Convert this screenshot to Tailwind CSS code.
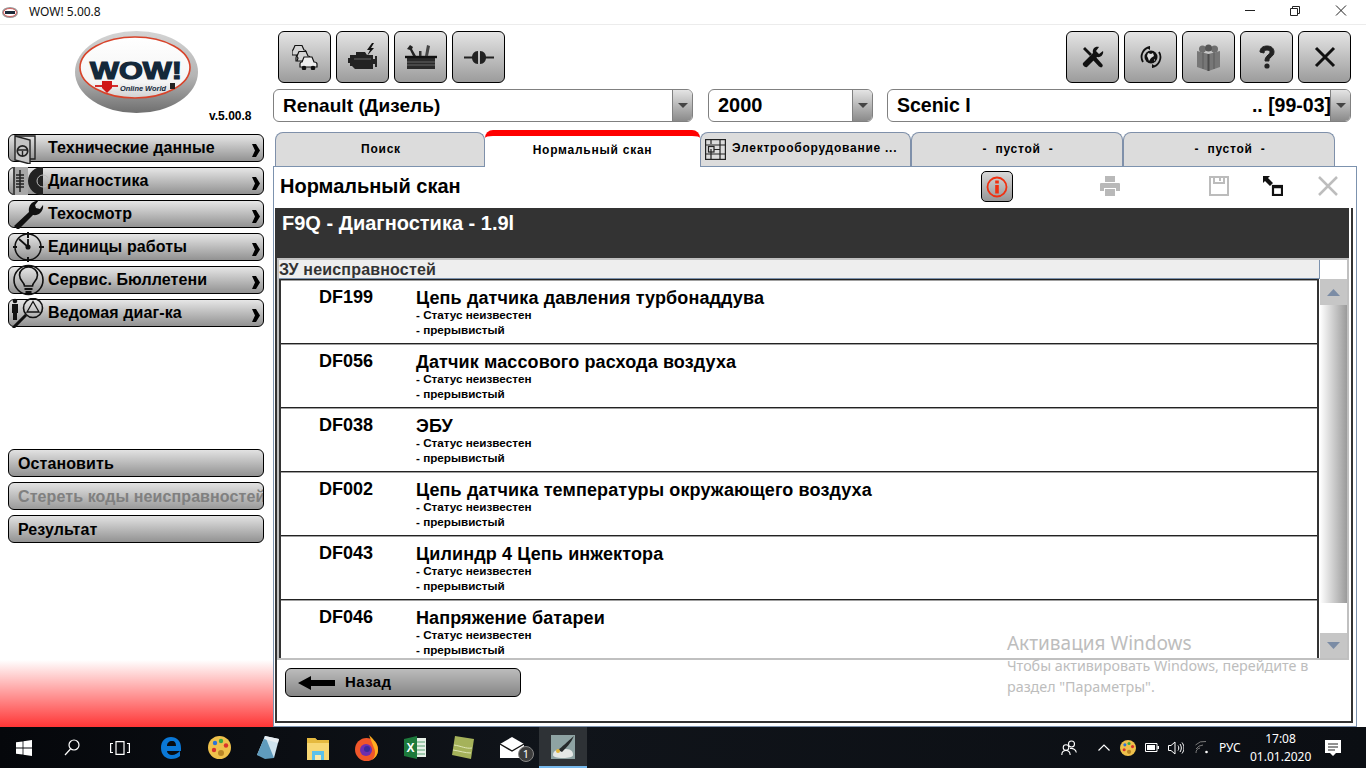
<!DOCTYPE html>
<html lang="ru">
<head>
<meta charset="utf-8">
<script src="https://cdn.jsdelivr.net/npm/@tailwindcss/browser@4"></script>
<title>WOW! 5.00.8</title>
</head>
<body class="relative w-[1366px] h-[768px] overflow-hidden flex flex-col bg-white text-black font-['Liberation_Sans',Arial,sans-serif]">

<!-- title bar -->
<header class="h-[25px] shrink-0 flex items-center border-b border-[#ececec] font-['Noto_Sans',sans-serif] text-[12px] text-[#111]">
  <svg class="ml-[2px] w-[16px] h-[11px]" viewBox="0 0 16 11"><ellipse cx="8" cy="5.5" rx="8" ry="5.5" fill="#9a9a9a"/><ellipse cx="8" cy="5.5" rx="6.5" ry="4" fill="#fff" stroke="#d33" stroke-width=".7"/><rect x="3" y="4" width="10" height="3" fill="#1c2a3a"/></svg>
  <span class="ml-[11px]">WOW! 5.00.8</span>
  <div class="ml-auto flex">
    <svg class="w-[46px] h-[24px]" viewBox="0 0 46 24"><path d="M17 10.500h10" stroke="#222" fill="none"/></svg>
    <svg class="w-[46px] h-[24px]" viewBox="0 0 46 24"><path d="M16.500 8.500h7v7h-7zM18.500 8.500v-2h7v7h-2" stroke="#222" fill="none"/></svg>
    <svg class="w-[46px] h-[24px]" viewBox="0 0 46 24"><path d="M16 5.500l10 10M26 5.500l-10 10" stroke="#222" fill="none"/></svg>
  </div>
</header>

<div class="h-[702px] shrink-0 flex">
  <!-- sidebar -->
  <aside class="w-[273px] shrink-0 flex flex-col bg-[linear-gradient(to_bottom,#ffffff_635px,#ff3535_702px)]">
    <div class="h-[109px] flex pl-[75px] pt-[6px]">
      <svg class="w-[123px] h-[82px] shrink-0" viewBox="0 0 123 82">
        <defs>
          <linearGradient id="lg1" x1="0" y1="0" x2="0" y2="1"><stop offset="0" stop-color="#d4d4d4"/><stop offset=".55" stop-color="#b4b4b4"/><stop offset="1" stop-color="#6f6f6f"/></linearGradient>
          <linearGradient id="lg2" x1="0" y1="0" x2="0" y2="1"><stop offset="0" stop-color="#ffffff"/><stop offset=".75" stop-color="#f4f4f4"/><stop offset="1" stop-color="#d0d0d0"/></linearGradient>
        </defs>
        <ellipse cx="61.500" cy="41" rx="61.500" ry="41" fill="url(#lg1)"/>
        <ellipse cx="60" cy="36.500" rx="55" ry="30.500" fill="url(#lg2)" stroke="#d8432a" stroke-width="1.600"/>
        <text x="15" y="48" font-family="'Liberation Sans',sans-serif" font-weight="700" font-size="23" fill="#14283a" stroke="#14283a" stroke-width="1.200" textLength="92" lengthAdjust="spacingAndGlyphs">WOW!</text>
        <path d="M20 55h23" stroke="#d01818" stroke-width="1.800"/>
        <path d="M27 50h10v7l-5 5-5-5z" fill="#d01818"/>
        <text x="45" y="59.500" font-family="'Liberation Sans',sans-serif" font-weight="700" font-style="italic" font-size="7" fill="#14283a" textLength="46" lengthAdjust="spacingAndGlyphs">Online World</text>
        <rect x="95" y="52" width="5" height="6" fill="#222"/>
      </svg>
      <span class="ml-[11px] self-end mb-[11px] text-[12px] leading-[14px] font-bold">v.5.00.8</span>
    </div>

    <nav class="flex flex-col gap-[5px] pl-[8px] text-[16px] font-bold tracking-[0.1px]">
      <a class="w-[256px] h-[28px] flex items-center rounded-[6px] border border-black bg-[linear-gradient(to_bottom,#e6e6e6,#929292)]">
        <svg class="w-[39px] h-[32px] shrink-0" viewBox="0 0 39 32" fill="none" stroke="#222" stroke-width="1.400"><path d="M6 4h20v23h-5"/><path d="M6 4l15 4v24L6 28z" fill="#c4c4c4"/><circle cx="13.500" cy="19" r="5.200" stroke-width="1.700"/><path d="M9 18h9M13.500 19v5"/></svg>
        <span>Технические данные</span>
        <svg class="ml-auto mr-[3px] mt-[4px] w-[8px] h-[13px]" viewBox="0 0 8 13"><path d="M0 0h4l4 6.500-4 6.500H0l3-6.500z" fill="#000"/></svg>
      </a>
      <a class="w-[256px] h-[28px] flex items-center rounded-[6px] border border-black bg-[linear-gradient(to_bottom,#e6e6e6,#929292)]">
        <svg class="w-[39px] h-[28px] shrink-0" viewBox="0 0 39 28"><rect x="4" y="0" width="15" height="28" fill="#a8a8a8"/><path d="M5 0v28" stroke="#222" stroke-width="1.500"/><path d="M11 3v22M7 8h8M7 11h8M7 14h8M7 17h8M7 20h8" stroke="#222" stroke-width="1.500"/><path d="M34 0a14 14 0 0 0-15 14 14 14 0 0 0 15 14z" fill="#222"/><circle cx="34" cy="14" r="6" fill="none" stroke="#bbb"/></svg>
        <span>Диагностика</span>
        <svg class="ml-auto mr-[3px] mt-[4px] w-[8px] h-[13px]" viewBox="0 0 8 13"><path d="M0 0h4l4 6.500-4 6.500H0l3-6.500z" fill="#000"/></svg>
      </a>
      <a class="w-[256px] h-[28px] flex items-center rounded-[6px] border border-black bg-[linear-gradient(to_bottom,#e6e6e6,#929292)]">
        <svg class="w-[39px] h-[30px] shrink-0" viewBox="0 0 39 30"><path d="M5 27L20 13c-1-5 2-10 7-11l3-1-4 5 1 3 4 1 3-4c1 6-4 11-10 10L9 31z" fill="#111"/></svg>
        <span>Техосмотр</span>
        <svg class="ml-auto mr-[3px] mt-[4px] w-[8px] h-[13px]" viewBox="0 0 8 13"><path d="M0 0h4l4 6.500-4 6.500H0l3-6.500z" fill="#000"/></svg>
      </a>
      <a class="w-[256px] h-[28px] flex items-center rounded-[6px] border border-black bg-[linear-gradient(to_bottom,#e6e6e6,#929292)]">
        <svg class="w-[39px] h-[32px] shrink-0" viewBox="0 0 39 32" fill="none" stroke="#111" stroke-width="1.500"><circle cx="19" cy="16" r="13"/><path d="M19 1v6M4 16h4M30 16h5M19 26v5" stroke-width="2"/><path d="M10 8l9 8M19 16V8" stroke-width="1.800"/><circle cx="19" cy="16" r="1.800" fill="#111"/></svg>
        <span>Единицы работы</span>
        <svg class="ml-auto mr-[3px] mt-[4px] w-[8px] h-[13px]" viewBox="0 0 8 13"><path d="M0 0h4l4 6.500-4 6.500H0l3-6.500z" fill="#000"/></svg>
      </a>
      <a class="w-[256px] h-[28px] flex items-center rounded-[6px] border border-black bg-[linear-gradient(to_bottom,#e6e6e6,#929292)]">
        <svg class="w-[39px] h-[32px] shrink-0" viewBox="0 0 39 32" fill="none" stroke="#111" stroke-width="1.600"><circle cx="19.500" cy="16" r="14.500"/><path d="M15.500 22c0-4-5-5-5-11a9 8 0 0 1 18 0c0 6-5 7-5 11z"/><path d="M15.500 25h8M16.500 28h6" stroke-width="2"/></svg>
        <span>Сервис. Бюллетени</span>
        <svg class="ml-auto mr-[3px] mt-[4px] w-[8px] h-[13px]" viewBox="0 0 8 13"><path d="M0 0h4l4 6.500-4 6.500H0l3-6.500z" fill="#000"/></svg>
      </a>
      <a class="w-[256px] h-[28px] flex items-center rounded-[6px] border border-black bg-[linear-gradient(to_bottom,#e6e6e6,#929292)]">
        <svg class="w-[39px] h-[30px] shrink-0" viewBox="0 0 39 30"><circle cx="6" cy="3" r="2.300" fill="#111"/><path d="M3 6h6v9H8v7H4v-7H3z" fill="#111"/><circle cx="24" cy="10" r="9.500" fill="none" stroke="#111" stroke-width="1.600"/><path d="M24 3.500l6 10.500H18z" fill="none" stroke="#111" stroke-width="1.300"/><path d="M17 17L4 30" stroke="#111" stroke-width="3"/></svg>
        <span>Ведомая диаг-ка</span>
        <svg class="ml-auto mr-[3px] mt-[4px] w-[8px] h-[13px]" viewBox="0 0 8 13"><path d="M0 0h4l4 6.500-4 6.500H0l3-6.500z" fill="#000"/></svg>
      </a>
    </nav>

    <div class="mt-[122px] flex flex-col gap-[5px] pl-[8px] text-[16px] font-bold tracking-[0.1px]">
      <button class="w-[256px] h-[28px] pl-[9px] pt-[1px] text-left rounded-[6px] border border-black bg-[linear-gradient(to_bottom,#e2e2e2,#929292)]">Остановить</button>
      <button class="w-[256px] h-[28px] pl-[9px] pt-[1px] text-left rounded-[6px] border border-black bg-[linear-gradient(to_bottom,#e2e2e2,#9a9a9a)] text-[#808080] whitespace-nowrap overflow-hidden">Стереть коды неисправностей</button>
      <button class="w-[256px] h-[28px] pl-[9px] pt-[1px] text-left rounded-[6px] border border-black bg-[linear-gradient(to_bottom,#e2e2e2,#929292)]">Результат</button>
    </div>
  </aside>

  <!-- main -->
  <main class="w-[1084px] shrink-0 flex flex-col">
    <!-- top buttons -->
    <div class="h-[52px] mt-[6px] shrink-0 flex gap-[5px] pl-[5px]">
      <button class="w-[53px] h-[52px] flex items-center justify-center rounded-[6px] border border-black bg-[linear-gradient(to_bottom,#e4e4e4,#9c9c9c)]">
        <svg class="w-[26px] h-[26px]" viewBox="0 0 26 26" fill="#d4d4d4" stroke="#111" stroke-width="1.200">
          <path d="M1 6l2-4.500h7L12 6c1 0 2 .5 2 2v3H0V8c0-1 0-2 1-2z"/>
          <path d="M5 12l2-4.500h7l2 4.500c1 0 2 .5 2 2v3H4v-3c0-1 0-2 1-2z"/>
          <path d="M10 18l2-5h8l2 5c2 0 3 1 3 2v3H8v-3c0-1 1-2 2-2z" fill="#eee"/>
          <circle cx="12" cy="24" r="1.700" fill="#111"/><circle cx="21" cy="24" r="1.700" fill="#111"/>
          <path d="M4 11l2 3-1 3" stroke="#111" fill="none"/>
        </svg>
      </button>
      <button class="w-[53px] h-[52px] flex items-center justify-center rounded-[6px] border border-black bg-[linear-gradient(to_bottom,#e4e4e4,#9c9c9c)]">
        <svg class="w-[32px] h-[28px]" viewBox="0 0 32 28"><path d="M1 15h2v-3h6V9h9l2 3h6v4h2v-3h2v11h-2v-3h-2v5H8l-3-3H3v-3H1z" fill="#222"/><path d="M7 16h17" stroke="#666"/><path d="M25 0l-5 7h3l-3 6 7-8h-3l3-5z" fill="#111"/></svg>
      </button>
      <button class="w-[53px] h-[52px] flex items-center justify-center rounded-[6px] border border-black bg-[linear-gradient(to_bottom,#e4e4e4,#9c9c9c)]">
        <svg class="w-[32px] h-[24px]" viewBox="0 0 32 24"><rect x="2" y="11" width="28" height="13" fill="#2a2a2a"/><path d="M0 12h32" stroke="#111" stroke-width="2.400"/><path d="M2 17h28M2 20h28" stroke="#666"/><path d="M5 0l3 2-1 2 4 7H8L5 5 2 4z" fill="#222"/><path d="M22 0l3 1-2 10h-3z" fill="#444"/><rect x="14" y="6" width="2.500" height="5" fill="#333"/></svg>
      </button>
      <button class="w-[53px] h-[52px] flex items-center justify-center rounded-[6px] border border-black bg-[linear-gradient(to_bottom,#e4e4e4,#9c9c9c)]">
        <svg class="w-[30px] h-[13px]" viewBox="0 0 30 13"><path d="M0 6.500h9M21 6.500h9" stroke="#222" stroke-width="2"/><path d="M14 0c-4 0-6 3-6 6.500S10 13 14 13zM16 0c4 0 6 3 6 6.500S20 13 16 13z" fill="#222"/></svg>
      </button>
      <div class="flex-1"></div>
      <button class="w-[53px] h-[52px] flex items-center justify-center rounded-[6px] border border-black bg-[linear-gradient(to_bottom,#e4e4e4,#9c9c9c)]">
        <svg class="w-[22px] h-[22px]" viewBox="0 0 22 22"><path d="M3 1l7 7-2 2-7-7zM10 13l3-3 7 8c1 1 1 2 0 3s-2 0-3-.500z" fill="#111"/><path d="M21 5l-4 3-3-3 3-4c-4-1-7 2-6 6L1 17c-1 2 2 5 4 4l10-10c4 1 7-3 6-6z" fill="#111"/></svg>
      </button>
      <button class="w-[53px] h-[52px] flex items-center justify-center rounded-[6px] border border-black bg-[linear-gradient(to_bottom,#e4e4e4,#9c9c9c)]">
        <svg class="w-[22px] h-[22px]" viewBox="0 0 22 22"><circle cx="11" cy="11" r="6.500" fill="#111"/><path d="M8 7l3 1 2-1 1 3-3 2-2 3-1-3-1-2zM14 13l1 1-1 1z" fill="#ddd"/><path d="M3 16A10 10 0 0 1 10 1M19 6a10 10 0 0 1-7 15" fill="none" stroke="#111" stroke-width="1.800"/><path d="M10 0l-3 2 3 2zM12 22l3-2-3-2z" fill="#111"/></svg>
      </button>
      <button class="w-[53px] h-[52px] flex items-center justify-center rounded-[6px] border border-black bg-[linear-gradient(to_bottom,#e4e4e4,#9c9c9c)]">
        <svg class="w-[23px] h-[27px]" viewBox="0 0 23 27"><circle cx="5.500" cy="5" r="3.500" fill="#6e6e6e"/><circle cx="17.500" cy="5" r="3.500" fill="#6e6e6e"/><circle cx="11.500" cy="4" r="3.500" fill="#555"/><path d="M0 7l11.500 3L23 7v16l-11.500 4L0 23z" fill="#777"/><path d="M11.500 10v17" stroke="#4c4c4c" stroke-width="2"/><path d="M6 8v17M17 8v17" stroke="#5c5c5c"/></svg>
      </button>
      <button class="w-[53px] h-[52px] flex items-center justify-center rounded-[6px] border border-black bg-[linear-gradient(to_bottom,#e4e4e4,#9c9c9c)]">
        <svg class="w-[20px] h-[24px]" viewBox="0 0 20 24"><path d="M3 7c0-4 3-6 7-6s7 2 7 6c0 3-2 4-4 6-1 1-1 2-1 3H8c0-3 1-4 3-6 1-1 2-2 2-3s-1-2-3-2-3 1-3 3z" fill="#222" stroke="#222"/><circle cx="10" cy="21" r="2.600" fill="#222"/></svg>
      </button>
      <button class="w-[53px] h-[52px] mr-[6px] flex items-center justify-center rounded-[6px] border border-black bg-[linear-gradient(to_bottom,#e4e4e4,#9c9c9c)]">
        <svg class="w-[22px] h-[22px]" viewBox="0 0 22 22"><path d="M2 2l18 18M20 2L2 20" stroke="#111" stroke-width="3"/></svg>
      </button>
    </div>

    <!-- combos -->
    <div class="h-[33px] mt-[6px] shrink-0 flex font-bold">
      <div class="w-[420px] flex items-stretch rounded-[6px] border border-[#808080] overflow-hidden text-[19px] tracking-[0.06px]">
        <span class="flex-1 pl-[9px] leading-[31px]">Renault (Дизель)</span>
        <span class="w-[20px] flex items-center justify-center border-l border-[#808080] bg-[linear-gradient(to_bottom,#e4e4e4,#8a8a8a)]"><svg class="w-[10px] h-[5px]" viewBox="0 0 10 5"><path d="M0 0h10L5 5z" fill="#444"/></svg></span>
      </div>
      <div class="w-[165px] ml-[15px] flex items-stretch rounded-[6px] border border-[#808080] overflow-hidden text-[20px]">
        <span class="flex-1 pl-[9px] leading-[31px]">2000</span>
        <span class="w-[20px] flex items-center justify-center border-l border-[#808080] bg-[linear-gradient(to_bottom,#e4e4e4,#8a8a8a)]"><svg class="w-[10px] h-[5px]" viewBox="0 0 10 5"><path d="M0 0h10L5 5z" fill="#444"/></svg></span>
      </div>
      <div class="w-[464px] ml-[14px] flex items-stretch rounded-[6px] border border-[#808080] overflow-hidden text-[19.5px]">
        <span class="flex-1 pl-[9px] leading-[31px]">Scenic I</span>
        <span class="leading-[31px] -mr-[1px]">.. [99-03]</span>
        <span class="w-[20px] flex items-center justify-center border-l border-[#808080] bg-[linear-gradient(to_bottom,#e4e4e4,#8a8a8a)]"><svg class="w-[10px] h-[5px]" viewBox="0 0 10 5"><path d="M0 0h10L5 5z" fill="#444"/></svg></span>
      </div>
    </div>

    <!-- tabs -->
    <div class="h-[36px] mt-[8px] shrink-0 flex items-start pl-[2px] text-[12px] font-bold tracking-[0.75px]">
      <div class="w-[210px] h-[34px] mt-[2px] pb-[2px] pl-[2px] flex items-center justify-center rounded-t-[8px] border border-b-0 border-[#7f90aa] bg-[#dcdcdc]">Поиск</div>
      <div class="relative z-10 w-[215px] h-[37px] flex items-center justify-center rounded-t-[8px] border-t-[6px] border-[#ff0000] bg-white pb-[3px]">Нормальный скан</div>
      <div class="w-[211px] h-[34px] mt-[2px] pb-[3px] flex items-center gap-[6px] pl-[4px] rounded-t-[8px] border border-b-0 border-[#7f90aa] bg-[#dcdcdc] whitespace-nowrap">
        <svg class="w-[21px] h-[21px] shrink-0 mt-[3px]" viewBox="0 0 21 21" fill="none" stroke="#222" stroke-width="1.200"><rect x=".6" y=".6" width="19.800" height="19.800"/><path d="M.6 6h19.800M.6 15h19.800M6 1v4M6 10v11M15 1v19M9 10.500h6"/><rect x="3.500" y="7.500" width="5.500" height="5.500"/></svg>
        <span>Электрооборудование ...</span>
      </div>
      <div class="w-[212px] h-[34px] mt-[2px] pb-[2px] pl-[2px] flex items-center justify-center rounded-t-[8px] border border-b-0 border-[#7f90aa] bg-[#dcdcdc] whitespace-pre">-  пустой  -</div>
      <div class="w-[212px] h-[34px] mt-[2px] pb-[2px] pl-[2px] flex items-center justify-center rounded-t-[8px] border border-b-0 border-[#7f90aa] bg-[#dcdcdc] whitespace-pre">-  пустой  -</div>
    </div>

    <!-- panel -->
    <section class="flex-1 min-h-0 flex flex-col border border-[#7c92ae] bg-white">
      <div class="h-[41px] shrink-0 flex items-center relative">
        <h1 class="pl-[6px] pb-[3px] text-[20px] leading-[24px] font-bold">Нормальный скан</h1>
        <button class="absolute left-[707px] top-[4px] w-[32px] h-[31px] flex items-center justify-center rounded-[5px] border border-black bg-[linear-gradient(to_bottom,#d8d8d8,#969696)]">
          <svg class="w-[22px] h-[22px]" viewBox="0 0 22 22"><circle cx="11" cy="11" r="9.500" fill="none" stroke="#f03010" stroke-width="1.800"/><rect x="9.200" y="4.500" width="3.600" height="3" fill="#f03010"/><rect x="9.200" y="9" width="3.600" height="8.500" fill="#f03010"/></svg>
        </button>
        <svg class="absolute left-[826px] top-[9px] w-[20px] h-[20px]" viewBox="0 0 20 20"><path d="M5 0h10v6H5zM1 7h18c1 0 1 1 1 1v7h-4v-3H4v3H0V8s0-1 1-1zM5 13h10v7H5z" fill="#b9b9b9"/></svg>
        <svg class="absolute left-[935px] top-[9px] w-[20px] h-[20px]" viewBox="0 0 20 20" fill="none" stroke="#bcbcbc" stroke-width="2"><path d="M1 1h18v18H1z"/><path d="M5 1v6h10V1M11 2v3" /></svg>
        <svg class="absolute left-[989px] top-[9px] w-[20px] h-[20px]" viewBox="0 0 20 20"><path d="M0 0h7L5 2l5 5-3 3-5-5-2 2z" fill="#111"/><rect x="10" y="10" width="9" height="9" fill="none" stroke="#111" stroke-width="2.200"/><path d="M10 11h9" stroke="#111" stroke-width="2.500"/></svg>
        <svg class="absolute left-[1044px] top-[9px] w-[20px] h-[20px]" viewBox="0 0 20 20"><path d="M1 1l18 18M19 1L1 19" stroke="#bdbdbd" stroke-width="2.500"/></svg>
      </div>

      <div class="flex-1 min-h-0 ml-[1px] mr-[3px] mb-[3px] border-2 border-t-0 border-[#333333] flex flex-col">
        <div class="h-[50px] shrink-0 mr-[2px] -ml-[2px] bg-[#333333] text-white text-[20px] font-bold pl-[7px] pt-[5px] leading-[20px]">F9Q - Диагностика - 1.9l</div>

        <div class="h-[402px] shrink-0 mr-[2px] border-2 border-[#c0c0c0] flex">
          <div class="w-[1041px] flex flex-col">
            <div class="h-[19px] shrink-0 bg-[#eeeeee] border-r border-b border-[#7c92ae] text-[16px] leading-[19px] tracking-[0.18px] font-bold text-[#333333]">ЗУ неисправностей</div>
            <div class="h-[379px] w-[1040px] overflow-hidden border-x-2 border-[#333333]">
              <div class="h-[64px] border-t border-[#222222] shadow-[inset_0_1px_0_#a0a0a0] flex">
                <div class="w-[135px] shrink-0 pt-[8px] pl-[38px] text-[18px] leading-[18px] font-bold">DF199</div>
                <div class="pt-[9px]"><div class="text-[18px] leading-[18px] tracking-[0.12px] font-bold">Цепь датчика давления турбонаддува</div><div class="text-[11.7px] leading-[15px] font-bold">- Статус неизвестен<br>- прерывистый</div></div>
              </div>
              <div class="h-[64px] border-t border-[#222222] shadow-[inset_0_1px_0_#a0a0a0] flex">
                <div class="w-[135px] shrink-0 pt-[8px] pl-[38px] text-[18px] leading-[18px] font-bold">DF056</div>
                <div class="pt-[9px]"><div class="text-[18px] leading-[18px] tracking-[0.12px] font-bold">Датчик массового расхода воздуха</div><div class="text-[11.7px] leading-[15px] font-bold">- Статус неизвестен<br>- прерывистый</div></div>
              </div>
              <div class="h-[64px] border-t border-[#222222] shadow-[inset_0_1px_0_#a0a0a0] flex">
                <div class="w-[135px] shrink-0 pt-[8px] pl-[38px] text-[18px] leading-[18px] font-bold">DF038</div>
                <div class="pt-[9px]"><div class="text-[18px] leading-[18px] tracking-[0.12px] font-bold">ЭБУ</div><div class="text-[11.7px] leading-[15px] font-bold">- Статус неизвестен<br>- прерывистый</div></div>
              </div>
              <div class="h-[64px] border-t border-[#222222] shadow-[inset_0_1px_0_#a0a0a0] flex">
                <div class="w-[135px] shrink-0 pt-[8px] pl-[38px] text-[18px] leading-[18px] font-bold">DF002</div>
                <div class="pt-[9px]"><div class="text-[18px] leading-[18px] tracking-[0.12px] font-bold">Цепь датчика температуры окружающего воздуха</div><div class="text-[11.7px] leading-[15px] font-bold">- Статус неизвестен<br>- прерывистый</div></div>
              </div>
              <div class="h-[64px] border-t border-[#222222] shadow-[inset_0_1px_0_#a0a0a0] flex">
                <div class="w-[135px] shrink-0 pt-[8px] pl-[38px] text-[18px] leading-[18px] font-bold">DF043</div>
                <div class="pt-[9px]"><div class="text-[18px] leading-[18px] tracking-[0.12px] font-bold">Цилиндр 4 Цепь инжектора</div><div class="text-[11.7px] leading-[15px] font-bold">- Статус неизвестен<br>- прерывистый</div></div>
              </div>
              <div class="h-[64px] border-t border-[#222222] shadow-[inset_0_1px_0_#a0a0a0] flex">
                <div class="w-[135px] shrink-0 pt-[8px] pl-[38px] text-[18px] leading-[18px] font-bold">DF046</div>
                <div class="pt-[9px]"><div class="text-[18px] leading-[18px] tracking-[0.12px] font-bold">Напряжение батареи</div><div class="text-[11.7px] leading-[15px] font-bold">- Статус неизвестен<br>- прерывистый</div></div>
              </div>
            </div>
          </div>
          <div class="w-[27px] flex flex-col">
            <div class="h-[19px] shrink-0 bg-white"></div>
            <div class="h-[26px] shrink-0 bg-[#c6c6c6] flex items-center justify-center"><svg class="w-[13px] h-[7px]" viewBox="0 0 13 7"><path d="M6.500 0L13 7H0z" fill="#7b8ca5"/></svg></div>
            <div class="h-[298px] shrink-0 bg-[linear-gradient(to_right,#ffffff,#9a9a9a)]"></div>
            <div class="h-[30px] shrink-0 bg-white"></div>
            <div class="h-[25px] shrink-0 bg-[#c6c6c6] flex items-center justify-center"><svg class="w-[13px] h-[7px]" viewBox="0 0 13 7"><path d="M0 0h13L6.500 7z" fill="#7b8ca5"/></svg></div>
          </div>
        </div>

        <div class="flex-1 pt-[8px] pl-[8px]">
          <button class="w-[236px] h-[29px] flex items-center rounded-[6px] border border-black bg-[linear-gradient(to_bottom,#bcbcbc,#868686)] text-[15px] font-bold tracking-[0.4px]">
            <svg class="ml-[12px] w-[37px] h-[14px]" viewBox="0 0 37 14"><path d="M0 7l13-7v4h24v6H13v4z" fill="#000"/></svg>
            <span class="ml-[10px]">Назад</span>
          </button>
        </div>
      </div>
    </section>
  </main>
</div>

<!-- watermark -->
<div class="absolute left-[1007px] top-[631px] w-[320px] font-['Noto_Sans',sans-serif] text-[#bdbdbd] pointer-events-none">
  <div class="text-[19px] leading-[24px]">Активация Windows</div>
  <div class="text-[14.3px] leading-[21px]">Чтобы активировать Windows, перейдите в раздел "Параметры".</div>
</div>

<!-- taskbar -->
<footer class="h-[41px] shrink-0 flex items-center bg-[linear-gradient(to_right,#05070b,#10141a_40%,#0b0e13)] text-white font-['Noto_Sans',sans-serif]">
  <div class="w-[48px] h-full flex items-center justify-center"><svg class="w-[16px] h-[16px]" viewBox="0 0 16 16"><path d="M0 2.300L6.600 1.400v6.200H0zM7.400 1.300L16 0v7.600H7.400zM0 8.400h6.600v6.200L0 13.700zM7.400 8.400H16V16l-8.600-1.300z" fill="#fff"/></svg></div>
  <div class="w-[48px] h-full flex items-center justify-center"><svg class="w-[16px] h-[17px]" viewBox="0 0 16 17" fill="none" stroke="#fff" stroke-width="1.200"><circle cx="10" cy="6" r="5"/><path d="M6.500 10L1 16"/></svg></div>
  <div class="w-[48px] h-full flex items-center justify-center"><svg class="w-[20px] h-[14px]" viewBox="0 0 20 14" fill="none" stroke="#fff" stroke-width="1.200"><path d="M6 .6h8v12.800H6zM3 2.500H.6v9H3M17 2.500h2.400v9H17"/></svg></div>
  <div class="w-[48px] ml-[3px] h-full flex items-center justify-center"><svg class="w-[20px] h-[22px]" viewBox="0 0 20 22"><path d="M10 0C4 0 0 4 0 11c0 7 5 11 10 11 4 0 7-1 9-3v-5c-2 2-5 4-8 4-3 0-5-2-5-4h14v-3c0-7-4-11-10-11zM6 9c0-3 2-5 5-5s4 2 4 5z" fill="#0a78d7"/></svg></div>
  <div class="w-[48px] h-full flex items-center justify-center"><svg class="w-[23px] h-[23px]" viewBox="0 0 23 23"><circle cx="11.500" cy="11.500" r="11.500" fill="#efc14b"/><circle cx="7" cy="7" r="2.200" fill="#2c74d8"/><circle cx="13" cy="5" r="2.200" fill="#3aa845"/><circle cx="18" cy="9.500" r="2.200" fill="#d8332c"/><circle cx="6" cy="14" r="2.200" fill="#d8332c"/><circle cx="13" cy="17" r="3" fill="#b98526"/></svg></div>
  <div class="w-[48px] ml-[1px] h-full flex items-center justify-center"><svg class="w-[22px] h-[24px]" viewBox="0 0 22 24"><path d="M8 0l14 3-5 19-17-3z" fill="#cfe3ee"/><path d="M8 0l-8 19 8 4 9-1z" fill="#5f9bbd"/><path d="M8 0l14 3-1 4L7 3z" fill="#e8eef2"/></svg></div>
  <div class="w-[48px] ml-[2px] h-full flex items-center justify-center"><svg class="w-[22px] h-[24px]" viewBox="0 0 22 24"><path d="M0 2h8l2 2h12v20H0z" fill="#f7d774"/><path d="M0 2h8l2 2h12v3H0z" fill="#e5b93f"/><path d="M5 15h12v9H5z" fill="#5cc1ea"/><path d="M8 19h6v5H8z" fill="#fbe9a8"/></svg></div>
  <div class="w-[48px] h-full flex items-center justify-center"><svg class="w-[23px] h-[26px]" viewBox="0 0 23 26"><circle cx="11.500" cy="14.500" r="11.500" fill="#f0562a"/><path d="M14 0c4 4 9 8 9 15 0 5-3 8-6 10 3-3 4-8 2-12z" fill="#fdae20"/><circle cx="11" cy="15" r="6" fill="#6d2fb0"/><circle cx="12" cy="14" r="3" fill="#3b2a9c"/></svg></div>
  <div class="w-[48px] ml-[1px] h-full flex items-center justify-center"><svg class="w-[22px] h-[23px]" viewBox="0 0 22 23"><path d="M8 2h14v19H8z" fill="#e7f1e8"/><path d="M13 6h8M13 10h8M13 14h8M13 18h8" stroke="#55a070"/><path d="M0 3l13-3v23L0 20z" fill="#1d7a3c"/><text x="2.500" y="16" font-size="12" font-weight="700" fill="#fff" font-family="'Liberation Sans',sans-serif">X</text></svg></div>
  <div class="w-[48px] h-full flex items-center justify-center"><svg class="w-[22px] h-[23px]" viewBox="0 0 22 23"><path d="M3 0l19 3-3 20-19-4z" fill="#a5b25a"/><path d="M2 9c7 1 12 4 18 3M1 14c7 1 12 3 18 3" stroke="#dfe6b5" fill="none"/></svg></div>
  <div class="w-[48px] ml-[3px] h-full relative flex items-center justify-center"><svg class="w-[24px] h-[21px] mr-[4px]" viewBox="0 0 24 21"><path d="M0 7L12 0l12 7v14H0z" fill="#fff"/><path d="M0 7l12 7 12-7" fill="none" stroke="#111" stroke-width="1.400"/></svg><span class="absolute left-[28px] top-[19px] w-[16px] h-[16px] rounded-full bg-[#3c3c3c] border border-[#888] text-[11px] leading-[14px] text-center">1</span></div>
  <div class="w-[48px] ml-[1px] h-full flex items-center justify-center bg-[#2e3236] border-b-[2px] border-[#76b9ed]"><svg class="w-[24px] h-[24px]" viewBox="0 0 24 24"><rect width="24" height="24" fill="#8ea3a3"/><path d="M2 20c0-5 5-6 11-6s9 1 9 6c0 2-4 3-10 3S2 22 2 20z" fill="#e5e8e6"/><path d="M7 15c4-3 9-8 16-14-3 7-8 12-12 16z" fill="#272b2c"/><circle cx="7" cy="16" r="2" fill="#e0b53a"/></svg></div>

  <div class="ml-auto h-full flex items-center text-[12px]">
    <svg class="w-[16px] h-[16px]" viewBox="0 0 16 16" fill="none" stroke="#fff" stroke-width="1.100"><circle cx="10.500" cy="4" r="3"/><circle cx="5" cy="7.500" r="2.800"/><path d="M.8 15c0-3 2-4.500 4.200-4.500S9 12 9.200 15M9 8.500c3-.500 6 1 6.300 4"/></svg>
    <svg class="ml-[21px] w-[12px] h-[7px]" viewBox="0 0 12 7" fill="none" stroke="#fff" stroke-width="1.200"><path d="M.5 6.500L6 1l5.500 5.500"/></svg>
    <svg class="ml-[10px] w-[16px] h-[16px]" viewBox="0 0 23 23"><circle cx="11.500" cy="11.500" r="11.500" fill="#efc14b"/><circle cx="7" cy="7" r="2.200" fill="#2c74d8"/><circle cx="13" cy="5" r="2.200" fill="#3aa845"/><circle cx="18" cy="9.500" r="2.200" fill="#d8332c"/><circle cx="6" cy="14" r="2.200" fill="#d8332c"/><circle cx="13" cy="17" r="3" fill="#b98526"/></svg>
    <svg class="ml-[9px] w-[14px] h-[9px]" viewBox="0 0 14 9"><path d="M.5.500h11.500v8H.5z" fill="none" stroke="#fff"/><rect x="2" y="2" width="8" height="5" fill="#fff"/><rect x="12.500" y="3" width="1.500" height="3" fill="#fff"/></svg>
    <svg class="ml-[9px] w-[16px] h-[14px]" viewBox="0 0 16 14" fill="none" stroke="#fff"><path d="M.5 4.500h2.500L7 1v12L3 9.500H.5zM10 4.500c1 1.500 1 3.500 0 5M12 3c1.800 2.500 1.800 5.500 0 8M14 1.500c2.600 3.500 2.600 7.500 0 11"/></svg>
    <svg class="ml-[11px] w-[14px] h-[13px]" viewBox="0 0 14 13" fill="none" stroke="#7a7a7a"><path d="M1 12a5 5 0 0 1 4-5M1 8a9 9 0 0 1 7-4M.5 4A12 12 0 0 1 11 .5"/><circle cx="11.500" cy="11" r="1.300" fill="#fff" stroke="none"/></svg>
    <span class="ml-[10px] w-[22px]">РУС</span>
    <div class="w-[61px] ml-[9px] text-center leading-[18px]"><div>17:08</div><div>01.01.2020</div></div>
    <svg class="ml-[14px] mr-[25px] w-[16px] h-[16px]" viewBox="0 0 16 16"><path d="M0 0h16v13h-5l-3 3-3-3H0z" fill="#fff"/><path d="M3 4h10M3 7h10M3 10h7" stroke="#222"/></svg>
  </div>
</footer>
</body>
</html>
